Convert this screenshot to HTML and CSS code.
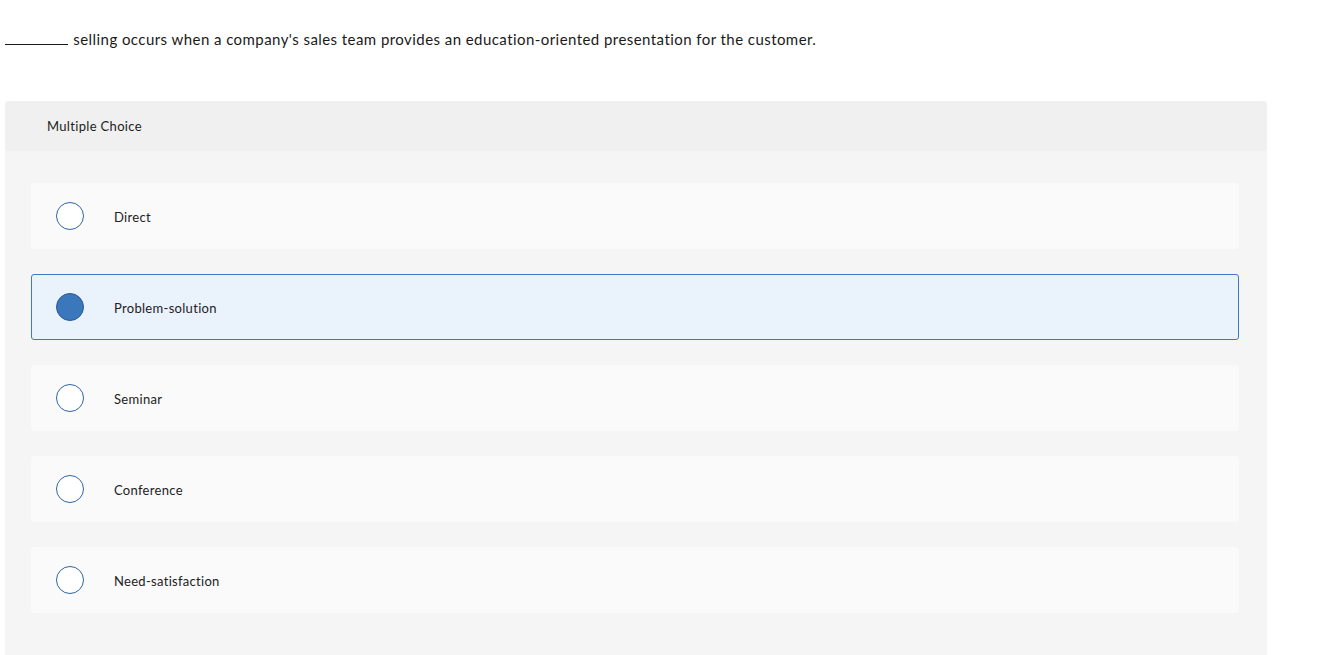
FILE: index.html
```html
<!DOCTYPE html>
<html>
<head>
<meta charset="utf-8">
<link rel="stylesheet" href="styles.css">
</head>
<body>
<div class="page">
  <p class="question"><span class="blank"></span> selling occurs when a company's sales team provides an education-oriented presentation for the customer.</p>
  <div class="card">
    <div class="card-head">Multiple Choice</div>
    <div class="card-body">
      <div class="option"><span class="radio"></span><span class="label">Direct</span></div>
      <div class="option selected"><span class="radio"></span><span class="label">Problem-solution</span></div>
      <div class="option"><span class="radio"></span><span class="label">Seminar</span></div>
      <div class="option"><span class="radio"></span><span class="label">Conference</span></div>
      <div class="option"><span class="radio"></span><span class="label">Need-satisfaction</span></div>
    </div>
  </div>
</div>
</body>
</html>
```
FILE: styles.css
```css
* { box-sizing: border-box; }
html, body { margin: 0; padding: 0; background: #fff; }
body { font-family: Lato, "Liberation Sans", sans-serif; color: #1a1a1a; }
.page { padding: 0 71px 0 5px; height: 655px; overflow: hidden; }
.question { margin: 0; padding-top: 30px; height: 101px; font-size: 15px; line-height: 18px; letter-spacing: 0.44px; }
.blank { display: inline-block; width: 63px; border-bottom: 1px solid #1a1a1a; height: 15px; vertical-align: baseline; margin-right: 1px; }
.card { background: #f5f5f5; border-radius: 4px 4px 0 0; width: 1262px; }
.card-head { background: #f0f0f0; height: 50px; padding-left: 42px; display: flex; align-items: center; font-size: 13px; color: #222; border-radius: 4px 4px 0 0; letter-spacing: 0.33px; }
.card-body { padding: 32px 28px 50px 26px; display: flex; flex-direction: column; gap: 25px; }
.option { height: 66px; background: #fafafa; border: 1px solid #fafafa; border-radius: 3px; display: flex; align-items: center; padding-left: 24px; font-size: 13px; color: #222; letter-spacing: 0.3px; }
.option.selected { background: #eaf2fc; border-color: #3b7bc6; }
.radio { width: 28px; height: 28px; border-radius: 50%; border: 1px solid #2f65a3; background: #fff; flex: none; }
.selected .radio { background: #3a77bb; border-color: #2a5b96; }
.label { margin-left: 30px; padding-top: 2px; }
```
